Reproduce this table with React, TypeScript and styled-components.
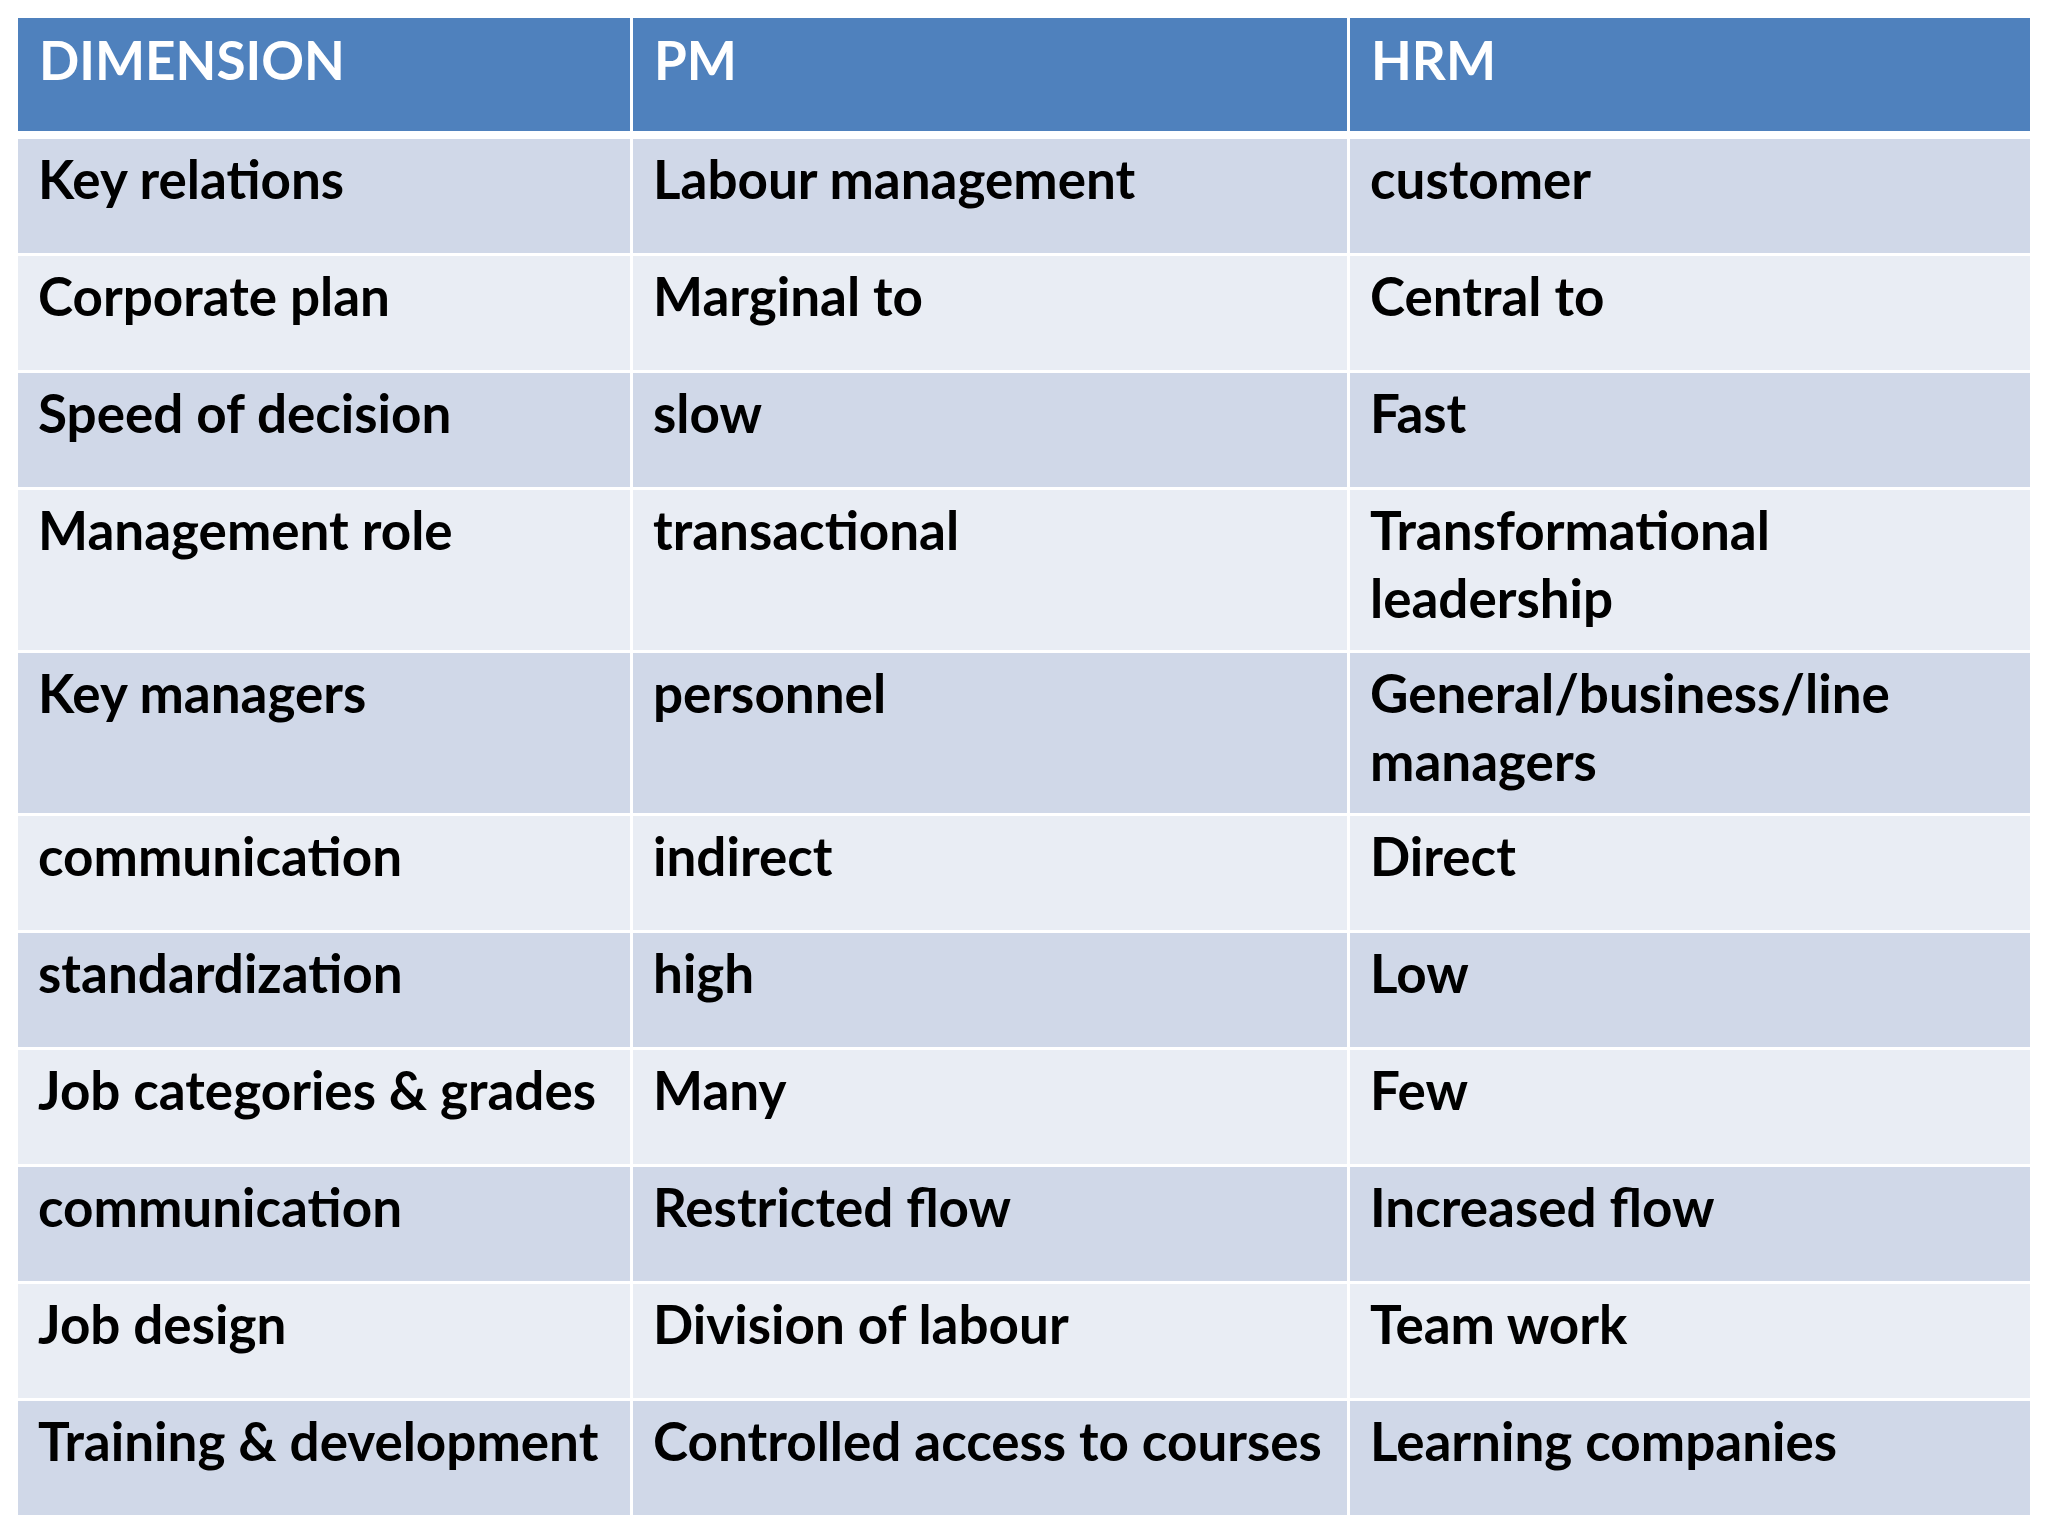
import { createGlobalStyle } from "styled-components";
import styled from "styled-components";

const GlobalStyle = createGlobalStyle`
  html, body {
    margin: 0;
    padding: 0;
    background: #ffffff;
  }
  body {
    font-family: Lato, "Open Sans", sans-serif;
  }
`;

const Page = styled.div`
  width: 2048px;
  height: 1536px;
  padding: 18px 0 0 18px;
  box-sizing: border-box;
  background: #ffffff;
`;

const Table = styled.div`
  width: 2012px;
  display: flex;
  flex-direction: column;
  gap: 3px;
`;

const Row = styled.div<{ $header?: boolean }>`
  display: grid;
  grid-template-columns: 612px 714px 680px;
  column-gap: 3px;
  margin-bottom: ${({ $header }) => ($header ? "5px" : "0")};
`;

const Cell = styled.div<{ $tone: "head" | "dark" | "light" }>`
  box-sizing: border-box;
  min-height: ${({ $tone }) => ($tone === "head" ? "113px" : "114px")};
  padding: ${({ $tone }) => ($tone === "head" ? "8px 8px 17px 21px" : "6px 8px 18px 20px")};
  font-family: Lato, "Open Sans", sans-serif;
  font-weight: 700;
  font-size: 53px;
  line-height: 68px;
  color: ${({ $tone }) => ($tone === "head" ? "#ffffff" : "#000000")};
  background: ${({ $tone }) =>
    $tone === "head" ? "#4f81bd" : $tone === "dark" ? "#d0d8e8" : "#e9edf4"};
`;

const rows: [string, string, string][] = [
  ["Key relations", "Labour management", "customer"],
  ["Corporate plan", "Marginal to", "Central to"],
  ["Speed of decision", "slow", "Fast"],
  ["Management role", "transactional", "Transformational leadership"],
  ["Key managers", "personnel", "General/business/line managers"],
  ["communication", "indirect", "Direct"],
  ["standardization", "high", "Low"],
  ["Job categories & grades", "Many", "Few"],
  ["communication", "Restricted flow", "Increased flow"],
  ["Job design", "Division of labour", "Team work"],
  ["Training & development", "Controlled access to courses", "Learning companies"],
];

export default function App() {
  return (
    <Page>
      <GlobalStyle />
      <Table>
        <Row $header>
          <Cell $tone="head">DIMENSION</Cell>
          <Cell $tone="head">PM</Cell>
          <Cell $tone="head">HRM</Cell>
        </Row>
        {rows.map((r, i) => {
          const tone = i % 2 === 0 ? "dark" : "light";
          return (
            <Row key={i}>
              {r.map((text, j) => (
                <Cell key={j} $tone={tone}>
                  {text}
                </Cell>
              ))}
            </Row>
          );
        })}
      </Table>
    </Page>
  );
}
